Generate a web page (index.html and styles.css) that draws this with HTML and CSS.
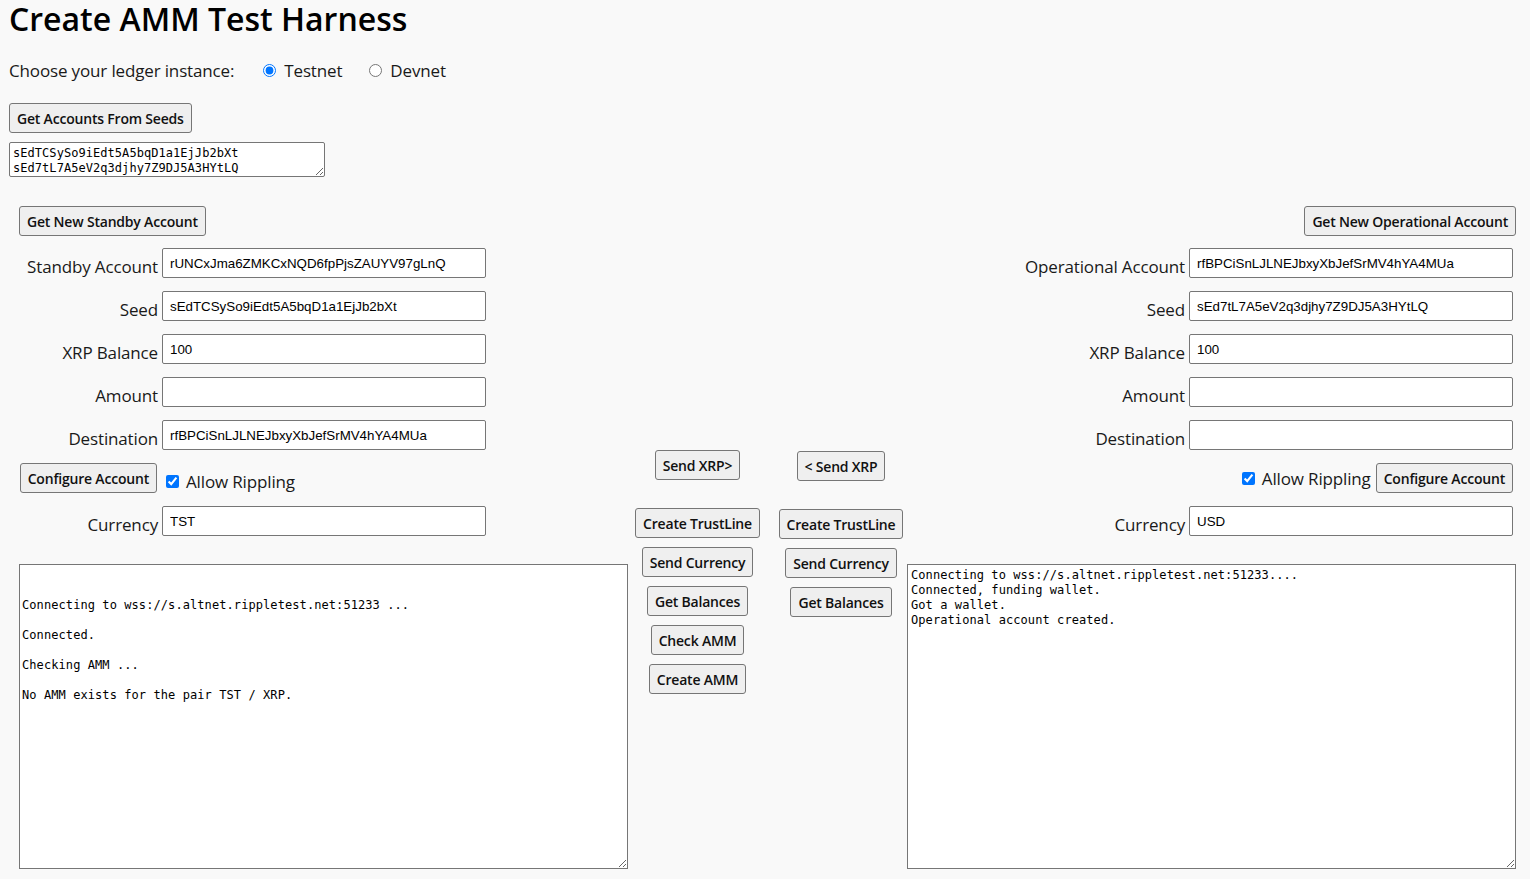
FILE: index.html
```html
<!DOCTYPE html>
<html lang="en">
<head>
<meta charset="utf-8">
<title>Create AMM Test Harness</title>
<link rel="stylesheet" href="styles.css">
</head>
<body>
<h1 class="title">Create AMM Test Harness</h1>
<div class="ledger-row">
  <span class="ledger-label">Choose your ledger instance:</span>
  <label class="radio-opt radio-first"><input type="radio" name="server" checked><span>Testnet</span></label>
  <label class="radio-opt"><input type="radio" name="server"><span>Devnet</span></label>
</div>
<button class="btn seeds-btn">Get Accounts From Seeds</button>
<textarea class="seeds">sEdTCSySo9iEdt5A5bqD1a1EjJb2bXt
sEd7tL7A5eV2q3djhy7Z9DJ5A3HYtLQ</textarea>

<div class="workspace">
  <section class="panel panel-left">
    <div class="panel-head"><button class="btn">Get New Standby Account</button></div>
    <div class="fields">
      <label class="field-label">Standby Account</label>
      <input class="field" type="text" value="rUNCxJma6ZMKCxNQD6fpPjsZAUYV97gLnQ">
      <label class="field-label">Seed</label>
      <input class="field" type="text" value="sEdTCSySo9iEdt5A5bqD1a1EjJb2bXt">
      <label class="field-label">XRP Balance</label>
      <input class="field" type="text" value="100">
      <label class="field-label">Amount</label>
      <input class="field" type="text" value="">
      <label class="field-label">Destination</label>
      <input class="field" type="text" value="rfBPCiSnLJLNEJbxyXbJefSrMV4hYA4MUa">
      <div class="cfg-cell"><button class="btn">Configure Account</button></div>
      <label class="ripple ripple-left"><input type="checkbox" checked><span>Allow Rippling</span></label>
      <label class="field-label">Currency</label>
      <input class="field" type="text" value="TST">
    </div>
    <textarea class="log log-left">


Connecting to wss://s.altnet.rippletest.net:51233 ...

Connected.

Checking AMM ...

No AMM exists for the pair TST / XRP.</textarea>
  </section>

  <section class="middle">
    <div class="mid-col mid-col-a">
      <button class="btn send-btn">Send XRP&gt;</button>
      <button class="btn">Create TrustLine</button>
      <button class="btn">Send Currency</button>
      <button class="btn">Get Balances</button>
      <button class="btn">Check AMM</button>
      <button class="btn">Create AMM</button>
    </div>
    <div class="mid-col mid-col-b">
      <button class="btn send-btn">&lt; Send XRP</button>
      <button class="btn">Create TrustLine</button>
      <button class="btn">Send Currency</button>
      <button class="btn">Get Balances</button>
    </div>
  </section>

  <section class="panel panel-right">
    <div class="panel-head panel-head-right"><button class="btn">Get New Operational Account</button></div>
    <div class="fields fields-right">
      <label class="field-label">Operational Account</label>
      <input class="field" type="text" value="rfBPCiSnLJLNEJbxyXbJefSrMV4hYA4MUa">
      <label class="field-label">Seed</label>
      <input class="field" type="text" value="sEd7tL7A5eV2q3djhy7Z9DJ5A3HYtLQ">
      <label class="field-label">XRP Balance</label>
      <input class="field" type="text" value="100">
      <label class="field-label">Amount</label>
      <input class="field" type="text" value="">
      <label class="field-label">Destination</label>
      <input class="field" type="text" value="">
      <div class="cfg-empty"></div>
      <div class="ripple ripple-right">
        <input type="checkbox" checked><span>Allow Rippling</span>
        <button class="btn">Configure Account</button>
      </div>
      <label class="field-label">Currency</label>
      <input class="field" type="text" value="USD">
    </div>
    <textarea class="log log-right">Connecting to wss://s.altnet.rippletest.net:51233....
Connected, funding wallet.
Got a wallet.
Operational account created.</textarea>
  </section>
</div>
</body>
</html>
```

FILE: styles.css
```css
* {
  box-sizing: border-box;
}

html, body {
  background: #f9f9f9;
}

body {
  margin: 0;
  padding: 0 9px;
  font-family: "Open Sans", "Noto Sans", sans-serif;
  font-size: 17px;
  letter-spacing: -0.15px;
  color: #1a1a1a;
}

.title {
  margin: 0;
  font-size: 32px;
  line-height: 38px;
  font-weight: 600;
  letter-spacing: 0;
  color: #000;
}

.ledger-row {
  display: flex;
  align-items: center;
  margin-top: 21px;
  line-height: 23px;
}

.radio-opt {
  display: flex;
  align-items: center;
  gap: 8px;
  margin-left: 27px;
}

.radio-first {
  margin-left: 29px;
}

.radio-opt input {
  margin: 0;
  width: 13px;
  height: 13px;
}

.btn {
  display: inline-flex;
  align-items: center;
  justify-content: center;
  height: 30px;
  padding: 0 7px;
  font-family: "Open Sans", "Noto Sans", sans-serif;
  font-size: 14px;
  font-weight: 600;
  letter-spacing: -0.2px;
  color: #111;
  background: #efefef;
  border: 1px solid #767676;
  border-radius: 3px;
  white-space: nowrap;
}

.seeds-btn {
  display: flex;
  margin-top: 21px;
}

.seeds {
  display: block;
  margin-top: 9px;
  width: 316px;
  height: 35px;
  padding: 3px 3px 0;
  overflow: hidden;
  font-family: "DejaVu Sans Mono", "Liberation Mono", monospace;
  font-size: 12px;
  line-height: 15px;
  letter-spacing: 0.05px;
  color: #000;
  background: #fff;
  border: 1px solid #767676;
  border-radius: 2px;
}

.workspace {
  display: flex;
  margin-top: 29px;
  margin-left: 10px;
}

.panel {
  width: 609px;
  display: flex;
  flex-direction: column;
}

.panel-head {
  display: flex;
}

.panel-head-right {
  justify-content: flex-end;
}

.fields {
  display: grid;
  grid-template-columns: 139px 324px;
  grid-auto-rows: 30px;
  column-gap: 4px;
  row-gap: 13px;
  margin-top: 12px;
}

.fields-right {
  grid-template-columns: auto 324px;
  justify-content: end;
  margin-right: 3px;
}

.field-label {
  justify-self: end;
  align-self: end;
  line-height: 23px;
  white-space: nowrap;
}

.field {
  width: 324px;
  height: 30px;
  padding: 0 7px;
  font-family: "Liberation Sans", Arial, sans-serif;
  font-size: 13.333px;
  letter-spacing: 0;
  color: #000;
  background: #fff;
  border: 1px solid #767676;
  border-radius: 2px;
}

.cfg-cell {
  display: flex;
  justify-content: flex-end;
  margin-right: 1px;
}

.ripple {
  display: flex;
  align-items: center;
  gap: 7px;
  line-height: 23px;
  white-space: nowrap;
}

.ripple input {
  margin: 0;
  width: 13px;
  height: 13px;
}

.ripple-left {
  align-self: end;
  padding-left: 4px;
}

.ripple-right {
  justify-content: flex-end;
}

.ripple-right .btn {
  margin-left: -2px;
}

.log {
  display: block;
  width: 609px;
  height: 305px;
  margin-top: 28px;
  padding: 3px 2px 2px;
  font-family: "DejaVu Sans Mono", "Liberation Mono", monospace;
  font-size: 12px;
  line-height: 15px;
  letter-spacing: 0.08px;
  color: #000;
  background: #fff;
  border: 1px solid #767676;
  border-radius: 0;
}

.log-right {
  padding-left: 3px;
}

.middle {
  width: 279px;
  display: grid;
  grid-template-columns: 139px 140px;
  align-items: start;
}

.mid-col {
  display: flex;
  flex-direction: column;
  align-items: center;
  gap: 9px;
}

.mid-col-a {
  padding-top: 244px;
}

.mid-col-b {
  padding-top: 245px;
  padding-left: 8px;
}

.send-btn {
  margin-bottom: 19px;
}
```
